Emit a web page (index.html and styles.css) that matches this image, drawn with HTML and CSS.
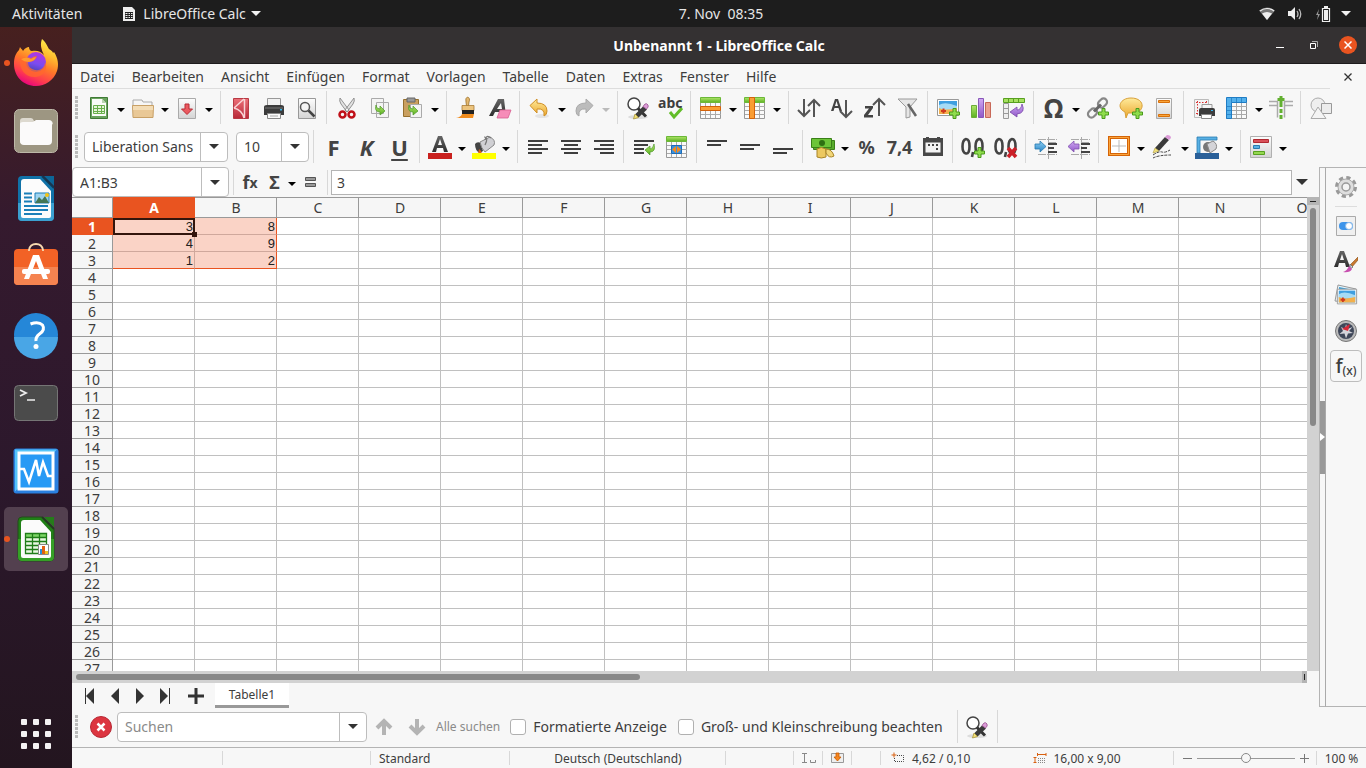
FILE: index.html
```html
<!DOCTYPE html>
<html lang="de">
<head>
  <meta charset="UTF-8" />
  <meta name="viewport" content="width=device-width, initial-scale=1.0" />
  <title>Unbenannt 1 - LibreOffice Calc</title>
  <link rel="stylesheet" href="styles.css">
</head>
<body>
  <svg class="defs" aria-hidden="true">
    <defs>
      <linearGradient id="g-dark" x1="0" y1="0" x2="0" y2="1"><stop offset="0" stop-color="#666"/><stop offset="1" stop-color="#2e2e2e"/></linearGradient>
      <linearGradient id="g-grey" x1="0" y1="0" x2="0" y2="1"><stop offset="0" stop-color="#fdfdfd"/><stop offset="1" stop-color="#d4d4d4"/></linearGradient>
      <linearGradient id="g-green" x1="0" y1="0" x2="0" y2="1"><stop offset="0" stop-color="#b0e66a"/><stop offset="1" stop-color="#5cb022"/></linearGradient>
      <linearGradient id="g-blue" x1="0" y1="0" x2="0" y2="1"><stop offset="0" stop-color="#8fd0f2"/><stop offset="1" stop-color="#2a85c8"/></linearGradient>
      <linearGradient id="g-purple" x1="0" y1="0" x2="0" y2="1"><stop offset="0" stop-color="#d0a8f4"/><stop offset="1" stop-color="#9058c8"/></linearGradient>
      <linearGradient id="g-yellow" x1="0" y1="0" x2="0" y2="1"><stop offset="0" stop-color="#ffeb9c"/><stop offset="1" stop-color="#eba62c"/></linearGradient>
      <linearGradient id="g-red" x1="0" y1="0" x2="0" y2="1"><stop offset="0" stop-color="#ec7078"/><stop offset="1" stop-color="#b82838"/></linearGradient>
      <linearGradient id="g-fox" x1=".8" y1="0" x2=".35" y2="1"><stop offset="0" stop-color="#fff44f"/><stop offset=".3" stop-color="#ffbd2f"/><stop offset=".55" stop-color="#ff7a28"/><stop offset=".8" stop-color="#ff3d4d"/><stop offset="1" stop-color="#e8057d"/></linearGradient>
      <linearGradient id="g-globe" x1=".7" y1="0" x2=".4" y2="1"><stop offset="0" stop-color="#b833e1"/><stop offset=".6" stop-color="#7a4cf0"/><stop offset="1" stop-color="#4b43b4"/></linearGradient>
    </defs>
    <symbol id="plus-badge" viewBox="0 0 11 11"><path d="M4 .5h3V4h3.500v3H7v3.500H4V7H.5V4H4z" fill="#8fdc4c" stroke="#4a9a1c"/></symbol>
    <symbol id="table-grid" viewBox="0 0 24 24">
      <path d="M1.500 6.500h20v16h-20z" fill="#fafafa" stroke="#999"/>
      <path d="M6.500 6v16M11.500 6v16M16.500 6v16M2 10.500h20M2 14.500h20M2 18.500h20" stroke="#aaa" fill="none"/>
    </symbol>
    <symbol id="find-replace" viewBox="0 0 24 24">
      <ellipse cx="12" cy="21" rx="10" ry="2" fill="#ddd"/>
      <circle cx="8" cy="8" r="6" fill="#fff" stroke="#444" stroke-width="1.500"/>
      <path d="M12 12.500l8 8" stroke="#333" stroke-width="3"/>
      <path d="M9 18.500l8.500-8.500 3.500 3.500-8.500 8z" fill="#3a3a3a"/>
      <path d="M17 10.500l2-2.500q2-1 3 1t-1.500 4z" fill="#dc9bd8" stroke="#a868a0"/>
      <path d="M9 18l-1.500 5 5-1.500z" fill="#f4e27a" stroke="#a8963a" stroke-width=".8"/>
    </symbol>
    <symbol id="picture" viewBox="0 0 24 24">
      <path d="M1.500 3.500h21v16h-21z" fill="#fff" stroke="#999"/>
      <path d="M3 5h18v13H3z" fill="#3f9fe0"/><path d="M3 9q6-4 18 1v4H3z" fill="#a6dbf5"/><path d="M3 12q6 3 18 0v6H3z" fill="#f3b04c"/>
      <path d="M5 15h5M7.500 12.500v5" stroke="#d03a1e" stroke-width="2"/>
    </symbol>
  </svg>

  <header class="topbar">
    <button class="top-item">Aktivitäten</button>
    <button class="top-item app-menu">
      <svg width="14" height="16" viewBox="0 0 14 16"><path d="M1 1h9l3 3v11H1z" fill="#eee"/><path d="M3 6h8v7H3z" fill="#222"/><path d="M3.500 7h2v1h-2zM6.500 7h1.500v1H6.500zM9 7h1.500v1H9zM3.500 9h2v1h-2zM6.500 9h1.500v1H6.500zM9 9h1.500v1H9zM3.500 11h2v1h-2zM6.500 11h1.500v1H6.500zM9 11h1.500v1H9z" fill="#eee"/></svg>
      LibreOffice Calc
      <span class="caret light"></span>
    </button>
    <button class="top-item clock">7. Nov&nbsp; 08:35</button>
    <button class="top-item system" aria-label="Systemmenü">
      <svg width="16" height="16" viewBox="0 0 16 16"><path d="M0 4.500Q8-1.500 16 4.500L8 14z" fill="#777"/><path d="M1 5q7-5 14 0" fill="none" stroke="#eee" stroke-width="1.200"/><path d="M3 7.500q5-3 10 0L8 14z" fill="#eee"/></svg>
      <svg width="16" height="16" viewBox="0 0 16 16"><path d="M1 5h3l4-4v13l-4-4H1z" fill="#eee"/><path d="M10 5q2 3 0 6M12 3q3.500 5 0 10" fill="none" stroke="#bbb" stroke-width="1.300"/></svg>
      <svg width="16" height="16" viewBox="0 0 16 16"><path d="M4 3L1 9h2l-1 5 3-6H3z" fill="#999"/><path d="M7.500 2.500h7v13h-7z" fill="none" stroke="#eee" stroke-width="1.200"/><path d="M9 4h4v10H9zM9 0h4v2H9z" fill="#eee"/></svg>
      <span class="caret light"></span>
    </button>
  </header>

  <div class="desktop">
    <nav class="dock" aria-label="Dock">
      <button class="dock-item running" aria-label="Firefox">
        <svg viewBox="0 0 48 48">
          <path d="M30 0c4 3 5 7 7 10 2 1 4 3 4 4l1-1c4 6 5 13 3 19-3 9-12 15-21 15C11 47 2 37 2 25c0-7 2-11 5-14l1-3c1 2 2 2 3 4 2-3 4-4 6-4 0 2 1 4 3 4 4-1 9 0 12 4-3-6-4-11-2-16z" fill="url(#g-fox)"/>
          <circle cx="24" cy="23" r="10" fill="url(#g-globe)"/>
          <path d="M8 20c4-2 8-2 11-1 3-2 5-2 6-2-1 5-6 6-9 6 0 5 3 7 7 8 6 1 10-3 10-8 3 6 0 14-9 15C14 39 7 31 8 20z" fill="#ff6a2c" opacity=".75"/>
          <path d="M9 20q6-3 10 0 3-2 5-2-1 4-7 5-5 0-8-3z" fill="#ff9a2e"/>
        </svg>
      </button>
      <button class="dock-item" aria-label="Dateien">
        <svg viewBox="0 0 48 48"><rect x="2.500" y="2.500" width="43" height="43" rx="5" fill="#9d9682" stroke="#bdb8a8"/><path d="M8 36V14q0-3 3-3h8q2 0 3 3h16q3 0 3 3z" fill="#ddd9cf"/><path d="M8 17q0-2 3-2h10l3-2h13q3 0 3 3v18q0 4-4 4H12q-4 0-4-4z" fill="#fbfafa"/></svg>
      </button>
      <button class="dock-item" aria-label="LibreOffice Writer">
        <svg viewBox="0 0 48 48"><path d="M10 1h20l12 12v29q0 4-4 4H10q-4 0-4-4V5q0-4 4-4z" fill="#1072a8"/><path d="M6 28h36v14q0 4-4 4H10q-4 0-4-4z" fill="#3ba0d0"/><path d="M30 1l12 12" stroke="#123a55" stroke-width="2"/><path d="M32 1h10v10z" fill="#0c6698"/><path d="M12 4h16l11 12v25q0 2-2 2H11q-2 0-2-2V7q0-3 3-3z" fill="#fcfcfc"/><path d="M12 18.500h8M12 22.500h8M12 26.500h8M12 31h24M12 35h24M12 39h18" stroke="#1b7fb8" stroke-width="2"/><path d="M23 18h14v10H23z" fill="#9fd4f0" stroke="#1b7fb8"/><path d="M23 28l4-6 3 3 3-4 4 7z" fill="#475"/><circle cx="35" cy="20" r="2" fill="#f5c211"/></svg>
      </button>
      <button class="dock-item" aria-label="Ubuntu Software">
        <svg viewBox="0 0 48 48"><path d="M6 6h36q4 0 4 4v28q0 4-4 4H6q-4 0-4-4V10q0-4 4-4z" fill="#f26226"/><path d="M2 24h44v14q0 4-4 4H6q-4 0-4-4z" fill="#f58350"/><path d="M17 8v-1q1-6 7-6t7 6v1" fill="none" stroke="#f7d9b0" stroke-width="1.800"/><path d="M21 12h6l9 24h-5l-7-18-7 18h-5z" fill="#fff"/><rect x="10" y="26" width="28" height="5" rx="2" fill="#fff"/></svg>
      </button>
      <button class="dock-item" aria-label="Hilfe">
        <svg viewBox="0 0 48 48"><circle cx="24" cy="24" r="22" fill="#2587d8"/><path d="M2 26h44a22 22 0 0 1-44 0z" fill="#49a6e6"/><path d="M18.500 13q8-3 12 1 3 5-3 9-4 3-3.500 7" fill="none" stroke="#fff" stroke-width="3"/><circle cx="24" cy="35.500" r="2.500" fill="#fff"/></svg>
      </button>
      <button class="dock-item" aria-label="Terminal">
        <svg viewBox="0 0 48 48"><rect x="2.500" y="6.500" width="43" height="35" rx="4" fill="#4b4b4b" stroke="#757575"/><path d="M8 11l6 3-6 3" fill="none" stroke="#eee" stroke-width="1.800"/><path d="M15 21h8" stroke="#eee" stroke-width="1.500"/></svg>
      </button>
      <button class="dock-item" aria-label="Systemüberwachung">
        <svg viewBox="0 0 48 48"><rect x="1.500" y="1.500" width="45" height="45" rx="3" fill="#2a80e0"/><path d="M3 2.500h42l-3 3H6v36l-3 3z" fill="#56c4f8"/><path d="M7 6h34v36H7z" fill="#279af5" stroke="#fff" stroke-width="3"/><path d="M8 22h4l5 13 7-22 3 16 4-14 5 14h5" fill="none" stroke="#fff" stroke-width="2.500"/></svg>
      </button>
      <button class="dock-item running active" aria-label="LibreOffice Calc">
        <svg viewBox="0 0 48 48"><path d="M10 2h20l12 12v28q0 4-4 4H10q-4 0-4-4V6q0-4 4-4z" fill="#208016" stroke="#244b1c"/><path d="M6 24h36v18q0 4-4 4H10q-4 0-4-4z" fill="#35a026"/><path d="M30 2l12 12" stroke="#243a20" stroke-width="2"/><path d="M32 2h10v10z" fill="#257c1a"/><path d="M12 5h16l11 12v24q0 2-2 2H11q-2 0-2-2V8q0-3 3-3z" fill="#fbfbfb"/><path d="M13 18h22v20H13z" fill="#e8f8e0"/><path d="M13 18h22v4H13z" fill="#7cd665"/><path d="M13.500 18.500h21v20h-21zM20.500 18v20M27.500 18v20M13 22.500h22M13 26.500h22M13 30.500h22M13 34.500h22" fill="none" stroke="#1f7d18" stroke-width="1.300"/><path d="M26.500 29.500h10v10h-10z" fill="#fff" stroke="#888"/><path d="M28 34h2v5h-2z" fill="#2a90d8"/><path d="M30 31h3v8h-3z" fill="#e06010"/><path d="M33 36h3v3h-3z" fill="#f0c020"/></svg>
      </button>
      <button class="dock-item apps" aria-label="Anwendungen anzeigen">
        <svg viewBox="0 0 48 48"><g fill="#f4f2f3"><rect x="9" y="9" width="6" height="6" rx="1"/><rect x="21" y="9" width="6" height="6" rx="1"/><rect x="33" y="9" width="6" height="6" rx="1"/><rect x="9" y="21" width="6" height="6" rx="1"/><rect x="21" y="21" width="6" height="6" rx="1"/><rect x="33" y="21" width="6" height="6" rx="1"/><rect x="9" y="33" width="6" height="6" rx="1"/><rect x="21" y="33" width="6" height="6" rx="1"/><rect x="33" y="33" width="6" height="6" rx="1"/></g></svg>
      </button>
    </nav>

    <main class="window">
      <div class="titlebar">
        <h1>Unbenannt 1 - LibreOffice Calc</h1>
        <div class="window-controls">
          <button aria-label="Minimieren"><svg width="10" height="12" viewBox="0 0 10 12"><path d="M1 8.500h8" stroke="#fff"/></svg></button>
          <button aria-label="Wiederherstellen"><svg width="10" height="10" viewBox="0 0 10 10"><path d="M3 1.500h5.500V7" fill="none" stroke="#aaa"/><path d="M1.500 3.500h5v5h-5z" fill="none" stroke="#fff"/></svg></button>
          <button class="close" aria-label="Schließen"><svg width="8" height="8" viewBox="0 0 8 8"><path d="M.5.5l7 7M7.500.5l-7 7" stroke="#fff" stroke-width="1.500"/></svg></button>
        </div>
      </div>

      <div class="menubar">
        <nav class="menus" aria-label="Menü">
          <button>Datei</button><button>Bearbeiten</button><button>Ansicht</button><button>Einfügen</button><button>Format</button><button>Vorlagen</button><button>Tabelle</button><button>Daten</button><button>Extras</button><button>Fenster</button><button>Hilfe</button>
        </nav>
        <button class="close-doc" aria-label="Dokument schließen"><svg width="8" height="8" viewBox="0 0 8 8"><path d="M.5.5l7 7M7.500.5l-7 7" stroke="#333" stroke-width="1.300"/></svg></button>
      </div>

      <!-- Standard -->
      <div class="toolbar" role="toolbar" aria-label="Standard">
        <span class="grip"></span>
        <button class="tool dd" aria-label="Neu"><svg viewBox="0 0 24 24"><path d="M3.500 1.500h17v21h-17z" fill="#6aa35e" stroke="#3f7a35"/><path d="M5 3h10l4 4v13H5z" fill="#fafcf8"/><path d="M15 3v4h4z" fill="#b8d4b0"/><path d="M6.500 9.500h11v8h-11zM10.500 9v9M14.500 9v9M6 12.500h12M6 15.500h12" fill="#e4f5d8" stroke="#6ab04c"/></svg></button>
        <button class="tool dd" aria-label="Öffnen"><svg viewBox="0 0 24 24"><path d="M2 4h9l1 2h9v8H2z" fill="#f6f6f6" stroke="#aaa"/><path d="M1.500 9.500h21l-.5 12H2z" fill="#e9c896" stroke="#c8a066"/><path d="M2 10h20v4H2z" fill="#f3dcb5"/></svg></button>
        <button class="tool dd" aria-label="Speichern"><svg viewBox="0 0 24 24"><path d="M3.500 2.500h17v20h-17z" fill="url(#g-grey)" stroke="#aaa"/><path d="M10 8h4v5h3.500L12 18.500 6.500 13H10z" fill="#ea5a60" stroke="#b92a35"/></svg></button>
        <span class="sep"></span>
        <button class="tool" aria-label="Als PDF exportieren"><svg viewBox="0 0 24 24"><path d="M4.500 2.500h15v20h-15z" fill="url(#g-red)" stroke="#b83a44"/><path d="M15.500 3v19M5 12l10-9M5 12q8 2 10 10" fill="none" stroke="#f8d4d6" stroke-width="1.500"/></svg></button>
        <button class="tool" aria-label="Drucken"><svg viewBox="0 0 24 24"><path d="M5.500 2.500h13v9h-13z" fill="#f2f2f2" stroke="#999"/><path d="M2 11q0-2 3-2h14q3 0 3 2v8H2z" fill="#3c3c3c"/><path d="M3 12h18" stroke="#777"/><path d="M5.500 17.500h13v5h-13z" fill="#fafafa" stroke="#888"/><path d="M8 20h8" stroke="#aaa"/><path d="M18 13h2v1.500h-2z" fill="#35b8f0"/></svg></button>
        <button class="tool" aria-label="Druckvorschau"><svg viewBox="0 0 24 24"><path d="M3.500 2.500h17v20h-17z" fill="url(#g-grey)" stroke="#999"/><circle cx="10" cy="11" r="4.500" fill="#f4f4f4" stroke="#555" stroke-width="1.500"/><path d="M13.500 14.500l6 6" stroke="#444" stroke-width="2.500"/></svg></button>
        <span class="sep"></span>
        <button class="tool" aria-label="Ausschneiden"><svg viewBox="0 0 24 24"><path d="M5 2q-1 3 1 6l6 8 2-2zM19 2q1 3-1 6l-6 8-2-2z" fill="#e2e2e2" stroke="#888" stroke-width=".9"/><circle cx="7.500" cy="18.500" r="3" fill="none" stroke="#c01018" stroke-width="2.500"/><circle cx="16.500" cy="18.500" r="3" fill="none" stroke="#c01018" stroke-width="2.500"/></svg></button>
        <button class="tool" aria-label="Kopieren"><svg viewBox="0 0 24 24"><path d="M3.500 2.500h12v15h-12zM8.500 6.500h12v15h-12z" fill="#f4f4f4" stroke="#aaa"/><path d="M8 9q0 4 4 4v-3l5 5-5 4v-3q-6 0-4-7z" fill="url(#g-green)" stroke="#4e9a28" stroke-width=".7"/></svg></button>
        <button class="tool dd" aria-label="Einfügen"><svg viewBox="0 0 24 24"><path d="M2.500 3.500h15v17h-15z" fill="#caa060" stroke="#96702e"/><path d="M6 2h8v4H6z" fill="#999" stroke="#666"/><path d="M9.500 8.500h11v13h-11z" fill="#f4f4f4" stroke="#aaa"/><path d="M8 9q0 4 4 4v-3l5 5-5 4v-3q-6 0-4-7z" fill="url(#g-green)" stroke="#4e9a28" stroke-width=".7"/></svg></button>
        <span class="sep"></span>
        <button class="tool" aria-label="Format übertragen"><svg viewBox="0 0 24 24"><path d="M12.500 1q3 1 1.500 5l-.5 4h-2L11 6q-1-4 1.500-5z" fill="#e4b870" stroke="#9a7028" stroke-width=".8"/><path d="M7 9.500h12v5H7z" fill="#ecc47e" stroke="#a87c38" stroke-width=".8"/><path d="M7 14h12v4H7z" fill="#222"/><path d="M7 18h12l-1 4H1q5-1 6-4z" fill="#f08c1e"/></svg></button>
        <button class="tool" aria-label="Formatierung löschen"><svg viewBox="0 0 24 24"><path d="M1 20L10 3h6l2 17h-4v-4H7l-2 4zM9 13h5l-1-6z" fill="url(#g-dark)"/><path d="M12 14h11l-3 8H9z" fill="#f68cb8" stroke="#d86090" stroke-width=".8"/></svg></button>
        <span class="sep"></span>
        <button class="tool dd" aria-label="Rückgängig"><svg viewBox="0 0 24 24"><ellipse cx="14" cy="20" rx="7" ry="2" fill="#e4e4e4"/><path d="M2 9.500L9 3v4q10 0 10 8 0 4-3 5 1-8-7-7v4z" fill="url(#g-yellow)" stroke="#d09028"/></svg></button>
        <button class="tool dd disabled" aria-label="Wiederherstellen"><svg viewBox="0 0 24 24"><path d="M21 9.500L14 3v4Q4 7 4 15q0 4 3 5-1-8 7-7v4z" fill="#bcbcbc" stroke="#aaa"/></svg></button>
        <span class="sep"></span>
        <button class="tool" aria-label="Suchen und Ersetzen"><svg><use href="#find-replace"/></svg></button>
        <button class="tool abc" aria-label="Rechtschreibung"><b>abc</b><svg viewBox="0 0 24 24"><path d="M11 16l4 5 8-9" fill="none" stroke="#62bd28" stroke-width="3"/></svg></button>
        <span class="sep"></span>
        <button class="tool dd" aria-label="Zeile"><svg viewBox="0 0 24 24"><use href="#table-grid" width="24" height="24"/><path d="M1.500 1.500h20v5h-20z" fill="url(#g-green)" stroke="#6cb838"/><path d="M1.500 10.500h20v4h-20z" fill="#f99d34" stroke="#d3620a"/></svg></button>
        <button class="tool dd" aria-label="Spalte"><svg viewBox="0 0 24 24"><use href="#table-grid" width="24" height="24"/><path d="M1.500 1.500h20v5h-20z" fill="url(#g-green)" stroke="#6cb838"/><path d="M6.500 1.500h5v21h-5z" fill="#f99d34" stroke="#d3620a"/></svg></button>
        <span class="sep"></span>
        <button class="tool" aria-label="Sortieren"><svg viewBox="0 0 24 24"><path d="M7 3v17M1 14l6 6 6-6M17 21V4M11 10l6-6 6 6" fill="none" stroke="#555" stroke-width="2"/></svg></button>
        <button class="tool" aria-label="Aufsteigend sortieren"><svg viewBox="0 0 24 24"><path d="M1 15L5 3h3l4 12H9.500l-1-3h-4l-1 3zM5 10h3L6.500 5z" fill="#444"/><path d="M16 4v17M10 15l6 6 6-6" fill="none" stroke="#555" stroke-width="2"/></svg></button>
        <button class="tool" aria-label="Absteigend sortieren"><svg viewBox="0 0 24 24"><path d="M2 10h8v2l-5 7h5v2.500H1V19l5-6.500H2z" fill="#444"/><path d="M16 20V3M10 9l6-6 6 6" fill="none" stroke="#555" stroke-width="2"/></svg></button>
        <button class="tool" aria-label="AutoFilter"><svg viewBox="0 0 24 24"><path d="M2 3h19l-7 8v10l-4 1V11z" fill="#e6e6e6" stroke="#999"/><path d="M12 8l8 12" stroke="#666" stroke-width="2.500"/></svg></button>
        <span class="sep"></span>
        <button class="tool" aria-label="Bild einfügen"><svg viewBox="0 0 24 24"><use href="#picture" width="24" height="24"/><use href="#plus-badge" x="13" y="12" width="11" height="11"/></svg></button>
        <button class="tool" aria-label="Diagramm einfügen"><svg viewBox="0 0 24 24"><path d="M2.500 9.500h5v12h-5z" fill="url(#g-green)" stroke="#6cac38"/><path d="M9.500 2.500h5v19h-5z" fill="url(#g-purple)" stroke="#8858b8"/><path d="M16.500 6.500h5v15h-5z" fill="#eba090" stroke="#c86858"/></svg></button>
        <button class="tool" aria-label="Pivot-Tabelle einfügen"><svg viewBox="0 0 24 24"><path d="M1.500 2.500h21v4h-21zM6.500 2v5M11.500 2v5M16.500 2v5" fill="#a6e060" stroke="#58a020"/><path d="M1.500 7.500h5v15h-5zM1 12.500h6M1 17.500h6" fill="#eee" stroke="#999"/><path d="M20 8q4 9-5 10v3l-7-5 7-5v3q4 0 5-6z" fill="url(#g-purple)" stroke="#7848a8" stroke-width=".8"/></svg></button>
        <span class="sep"></span>
        <button class="tool dd glyph omega" aria-label="Sonderzeichen">Ω</button>
        <button class="tool" aria-label="Hyperlink einfügen"><svg viewBox="0 0 24 24"><g fill="none" stroke="#888" stroke-width="2.200"><rect x="13" y="2" width="7" height="10" rx="3.500" transform="rotate(45 16.500 7)"/><rect x="3" y="12" width="7" height="10" rx="3.500" transform="rotate(45 6.500 17)"/></g><path d="M8 15.500l7-7" stroke="#666" stroke-width="3"/><use href="#plus-badge" x="12" y="12" width="11" height="11"/></svg></button>
        <button class="tool" aria-label="Kommentar einfügen"><svg viewBox="0 0 24 24"><path d="M12 2c15 0 14 15 2 15l-5 0-2 5-1-6C-3 12 1 2 12 2z" fill="url(#g-yellow)" stroke="#d8a038"/><use href="#plus-badge" x="13" y="12" width="11" height="11"/></svg></button>
        <button class="tool" aria-label="Kopf- und Fußzeilen"><svg viewBox="0 0 24 24"><path d="M4.500 2.500h15v20h-15z" fill="url(#g-grey)" stroke="#aaa"/><path d="M6.500 4.500h11v2h-11zM6.500 18.500h11v2h-11z" fill="#f9a53a" stroke="#d8700a"/></svg></button>
        <span class="sep"></span>
        <button class="tool" aria-label="Druckbereich"><svg viewBox="0 0 24 24"><path d="M2.500 3.500h14v18h-14z" fill="#f4f4f4" stroke="#bbb"/><path d="M4 6.500h12M5.500 5v14M14.500 5v8M4 17.500h5" stroke="#d83030" stroke-dasharray="1.500 1.500"/><path d="M10 8.500h10v5H10z" fill="#f4f4f4" stroke="#999"/><path d="M7 14q0-2 2-2h12q2 0 2 2v6H7z" fill="#3c3c3c"/><path d="M9.500 18.500h10v4h-10z" fill="#fff" stroke="#888"/><path d="M19 14h2v1h-2z" fill="#35b8f0"/></svg></button>
        <button class="tool dd" aria-label="Zeilen und Spalten fixieren"><svg viewBox="0 0 24 24"><use href="#table-grid" width="24" height="24"/><path d="M1.500 1.500h20v5h-15v16h-5z" fill="#52b0ec" stroke="#1f7cc4"/><path d="M6.500 2v4M11.500 2v4M16.500 2v4M2 10.500h4M2 14.500h4M2 18.500h4" stroke="#2c88cc"/></svg></button>
        <button class="tool" aria-label="Fenster teilen"><svg viewBox="0 0 24 24"><path d="M0 5.500h8.500v16M0 9.500h8M24 5.500h-8.500v16M24 9.500h-8" fill="none" stroke="#aaa" stroke-width="1.500"/><path d="M12 7v16" stroke="#62b030" stroke-width="3" stroke-dasharray="4 2"/><path d="M12 0v7M8.500 3.500h7" stroke="#62b030" stroke-width="3"/></svg></button>
        <span class="sep"></span>
        <button class="tool" aria-label="Zeichenfunktionen"><svg viewBox="0 0 24 24"><circle cx="9" cy="9" r="7" fill="#eee" stroke="#aaa"/><path d="M12.500 7.500h10v10h-10z" fill="#ececec" stroke="#999"/><path d="M9 11l8 11.500H2z" fill="#f4f4f4" stroke="#aaa"/></svg></button>
      </div>

      <!-- Format -->
      <div class="toolbar format-bar" role="toolbar" aria-label="Format">
        <span class="grip"></span>
        <div class="combo font-name">
          <input type="text" aria-label="Schriftname" value="Liberation Sans"><button aria-label="Schriftname wählen"><span class="caret"></span></button>
        </div>
        <div class="combo font-size">
          <input type="text" aria-label="Schriftgröße" value="10"><button aria-label="Schriftgröße wählen"><span class="caret"></span></button>
        </div>
        <span class="sep"></span>
        <button class="tool glyph" aria-label="Fett">F</button>
        <button class="tool glyph italic" aria-label="Kursiv">K</button>
        <button class="tool glyph underline" aria-label="Unterstrichen">U</button>
        <span class="sep"></span>
        <button class="tool dd" aria-label="Schriftfarbe"><svg viewBox="0 0 24 24"><path d="M4 17L10 1h4l6 16h-4l-1-4H9l-1 4zM10 10h4l-2-6z" fill="url(#g-dark)"/><path d="M0 18h24v6H0z" fill="#c9211e"/></svg></button>
        <button class="tool dd" aria-label="Hintergrundfarbe"><svg viewBox="0 0 24 24"><path d="M3 9q2-3 6-1l2 8-3 2q-5-2-5-9z" fill="#444"/><path d="M8 7l10-5q6 3 4 8L13 17q-4-4-5-10z" fill="#d0d0d4" stroke="#888"/><path d="M12 2q5 0 1 8M19 3q-5-4-6 2" fill="none" stroke="#777" stroke-width="1.200"/><path d="M7 14q3 2 3 5H6z" fill="#e06018"/><path d="M0 18h24v6H0z" fill="#ff0"/></svg></button>
        <span class="sep"></span>
        <button class="tool" aria-label="Linksbündig"><svg viewBox="0 0 24 24"><path d="M2 6h20M2 10h14M2 14h20M2 18h14" stroke="#3e3e3e" stroke-width="2"/></svg></button>
        <button class="tool" aria-label="Zentriert"><svg viewBox="0 0 24 24"><path d="M2 6h20M5 10h14M2 14h20M5 18h14" stroke="#3e3e3e" stroke-width="2"/></svg></button>
        <button class="tool" aria-label="Rechtsbündig"><svg viewBox="0 0 24 24"><path d="M2 6h20M8 10h14M2 14h20M8 18h14" stroke="#3e3e3e" stroke-width="2"/></svg></button>
        <span class="sep"></span>
        <button class="tool" aria-label="Zeilenumbruch"><svg viewBox="0 0 24 24"><path d="M2 6h20M2 10h14M2 14h10M2 18h10" stroke="#3e3e3e" stroke-width="2"/><path d="M22 9q2 8-4 8v3l-5-5 5-4v3q3 0 4-5z" fill="url(#g-green)" stroke="#4e9a28" stroke-width=".7"/></svg></button>
        <button class="tool" aria-label="Zellen verbinden"><svg viewBox="0 0 24 24"><use href="#table-grid" width="24" height="24"/><path d="M1.500 1.500h20v5h-20z" fill="url(#g-green)" stroke="#6cb838"/><path d="M6.500 10.500h10v8h-10z" fill="#3a92e0" stroke="#1c6cb8"/><path d="M11 11v7l-4-3.500zM12 11v7l4-3.500z" fill="#f58a1e"/></svg></button>
        <span class="sep"></span>
        <button class="tool" aria-label="Oben ausrichten"><svg viewBox="0 0 24 24"><path d="M2 6h20M2 10h14" stroke="#3e3e3e" stroke-width="2"/></svg></button>
        <button class="tool" aria-label="Vertikal zentrieren"><svg viewBox="0 0 24 24"><path d="M2 10h20M2 14h14" stroke="#3e3e3e" stroke-width="2"/></svg></button>
        <button class="tool" aria-label="Unten ausrichten"><svg viewBox="0 0 24 24"><path d="M2 14h20M2 18h14" stroke="#3e3e3e" stroke-width="2"/></svg></button>
        <span class="sep"></span>
        <button class="tool dd" aria-label="Währung"><svg viewBox="0 0 24 24"><path d="M2.500 5.500h21v9h-21z" fill="#58ac2c" stroke="#3a8018"/><path d="M.5 3.500h20v9h-20z" fill="#6cc438" stroke="#3a8018"/><circle cx="11" cy="8" r="3" fill="#2e7012"/><path d="M6 14q4-3 9 0v8q-5 2-9 0z" fill="#ecc860" stroke="#a88428"/><path d="M15 14q6 0 8 7-5 3-8-3z" fill="#f2d678" stroke="#a88428"/></svg></button>
        <button class="tool glyph number" aria-label="Prozent">%</button>
        <button class="tool glyph number" aria-label="Zahl">7,4</button>
        <button class="tool" aria-label="Datum"><svg viewBox="0 0 24 24"><path d="M2 3h3V2h3v1h8V2h3v1h3v18H2z" fill="#484848"/><path d="M4.500 7.500h15v10h-15z" fill="#f4f4f4"/><path d="M7 9h2v2H7zM11 9h2v2h-2zM15 9h2v2h-2zM15 13h2v2h-2z" fill="#444"/></svg></button>
        <span class="sep"></span>
        <button class="tool" aria-label="Dezimalstelle hinzufügen"><svg viewBox="0 0 24 24"><path d="M5 4q3.500 0 3.500 7.500T5 18.500 1.500 11.500 5 4zM18 4q3.500 0 3.500 7.500T18 18.500t-3.500-7T18 4zM12 17l-1 5" fill="none" stroke="#444" stroke-width="2.600"/><use href="#plus-badge" x="13" y="12" width="11" height="11"/></svg></button>
        <button class="tool" aria-label="Dezimalstelle löschen"><svg viewBox="0 0 24 24"><path d="M5 4q3.500 0 3.500 7.500T5 18.500 1.500 11.500 5 4zM18 4q3.500 0 3.500 7.500T18 18.500t-3.500-7T18 4zM12 17l-1 5" fill="none" stroke="#444" stroke-width="2.600"/><path d="M14 13l8 9M22 13l-8 9" stroke="#cc2028" stroke-width="3.500"/></svg></button>
        <span class="sep"></span>
        <button class="tool" aria-label="Einzug erhöhen"><svg viewBox="0 0 24 24"><path d="M4 4.500h19M4 19.500h19M14 7.500h9M14.500 2v22" stroke="#aaa" stroke-dasharray="8 1"/><path d="M14 9h9M14 13h6M14 17h9" stroke="#444" stroke-width="2"/><path d="M1 9h5V6l6 5.500-6 5.500v-3H1z" fill="url(#g-blue)" stroke="#2478b0" stroke-width=".8"/></svg></button>
        <button class="tool" aria-label="Einzug verringern"><svg viewBox="0 0 24 24"><path d="M4 4.500h19M4 19.500h19M14 7.500h9M14.500 2v22" stroke="#aaa" stroke-dasharray="8 1"/><path d="M14 9h9M14 13h6M14 17h9" stroke="#444" stroke-width="2"/><path d="M12 9H7V6l-6 5.500L7 17v-3h5z" fill="url(#g-purple)" stroke="#8050b0" stroke-width=".8"/></svg></button>
        <span class="sep"></span>
        <button class="tool dd" aria-label="Umrandung"><svg viewBox="0 0 24 24"><path d="M2.500 2.500h19v17h-19z" fill="#fff" stroke="#d46408" stroke-width="3"/><path d="M2.500 2.500h19v17h-19z" fill="none" stroke="#fba53c"/><path d="M12 5v12M5 11h14" stroke="#bbb"/></svg></button>
        <button class="tool dd" aria-label="Umrandungsstil"><svg viewBox="0 0 24 24"><path d="M4 13L14 2l4 3L8 16z" fill="#3a3a3a"/><path d="M14 2l2-2q4 0 4 3l-2 2z" fill="#dc9bd8"/><path d="M4 13l-2 5 6-2z" fill="#f4e27a" stroke="#a8963a" stroke-width=".6"/><path d="M2 20q6-4 9-3t8-2M2 23q6-3 18-3" fill="none" stroke="#444" stroke-dasharray="3 1"/></svg></button>
        <button class="tool dd" aria-label="Umrandungsfarbe"><svg viewBox="0 0 24 24"><path d="M2 18V2h20v3H5v13z" fill="#58b0e4" stroke="#287cb0" stroke-width=".8"/><circle cx="13" cy="12" r="5" fill="#777"/><path d="M12 9l6-3q5 3 3 8l-6 4z" fill="#d4d4d8" stroke="#888"/><path d="M0 18h24v6H0z" fill="#2a6099"/></svg></button>
        <span class="sep"></span>
        <button class="tool dd" aria-label="Bedingte Formatierung"><svg viewBox="0 0 24 24"><path d="M1.500 1.500h21v21h-21z" fill="url(#g-grey)" stroke="#b0b0b0"/><path d="M4.500 4.500h15v3h-15z" fill="#d85058" stroke="#b02830"/><path d="M4.500 10.500h6v3h-6z" fill="#58b0e4" stroke="#287cb0"/><path d="M4.500 16.500h11v3h-11z" fill="#94d850" stroke="#58a020"/></svg></button>
      </div>

      <div class="workspace">
        <div class="editor">
          <div class="formula-bar">
            <div class="combo name-box">
              <input type="text" aria-label="Namenfeld" value="A1:B3"><button aria-label="Bereich wählen"><span class="caret"></span></button>
            </div>
            <span class="sep"></span>
            <button class="tool small glyph fx" aria-label="Funktionsassistent">f<sub>x</sub></button>
            <button class="tool small dd glyph sigma" aria-label="Summe">Σ</button>
            <button class="tool small" aria-label="Formel"><svg width="12" height="10" viewBox="0 0 12 10"><path d="M1.500.5h10v3h-10zM1.500 6.500h10v3h-10z" fill="#999" stroke="#555"/></svg></button>
            <span class="sep"></span>
            <input class="formula-input" type="text" aria-label="Eingabezeile" value="3">
            <button class="expand" aria-label="Eingabezeile erweitern"><span class="caret big"></span></button>
          </div>

          <div class="sheet-area">
            <div class="sheet-view"><table class="sheet" id="sheet"></table></div>
            <div class="scroll-v"><span class="split"></span><span class="thumb"></span></div>
          </div>
          <div class="scroll-h"><span class="track"><span class="thumb"></span></span><span class="split"></span></div>

          <div class="tabs">
            <button aria-label="Erste Tabelle"><svg width="12" height="16" viewBox="0 0 12 16"><path d="M1.500 0v16" stroke="#333"/><path d="M10 0v16L2 8z" fill="#333"/></svg></button>
            <button aria-label="Vorherige Tabelle"><svg width="12" height="16" viewBox="0 0 12 16"><path d="M10 0v16L2 8z" fill="#333"/></svg></button>
            <button aria-label="Nächste Tabelle"><svg width="12" height="16" viewBox="0 0 12 16"><path d="M2 0v16l8-8z" fill="#333"/></svg></button>
            <button aria-label="Letzte Tabelle"><svg width="12" height="16" viewBox="0 0 12 16"><path d="M10.500 0v16" stroke="#333"/><path d="M1 0v16l8-8z" fill="#333"/></svg></button>
            <button class="add" aria-label="Tabelle hinzufügen"><svg width="18" height="18" viewBox="0 0 18 18"><path d="M9 1v16M1 9h16" stroke="#333" stroke-width="3"/></svg></button>
            <button class="tab">Tabelle1</button>
          </div>
        </div>

        <div class="splitter"><button aria-label="Seitenleiste ausblenden"></button></div>
        <aside class="sidebar" aria-label="Seitenleiste">
          <button aria-label="Einstellungen"><svg viewBox="0 0 24 24"><circle cx="12" cy="12" r="9" fill="none" stroke="#999" stroke-width="4" stroke-dasharray="4 3.070"/><circle cx="12" cy="12" r="8" fill="#dedede" stroke="#aaa"/><circle cx="12" cy="12" r="4" fill="#f4f4f4" stroke="#999" stroke-width="1.500"/></svg></button>
          <hr>
          <button aria-label="Eigenschaften"><svg viewBox="0 0 24 24"><path d="M2.500 2.500h19v19h-19z" fill="#f0f0f0" stroke="#aaa"/><rect x="5" y="8" width="14" height="8" rx="4" fill="#3d94ea"/><circle cx="15" cy="12" r="3.500" fill="#fff" stroke="#88b8e8"/></svg></button>
          <button aria-label="Formatvorlagen"><svg viewBox="0 0 24 24"><path d="M0 18L6 2h4l6 16h-4l-1-4H5l-1 4zM6 11h4L8 5z" fill="url(#g-dark)"/><path d="M24 8l-8 8 2 2 6-7z" fill="#c87830" stroke="#8a5018" stroke-width=".6"/><path d="M16 15l3 3-3 2z" fill="#ddd" stroke="#777"/><path d="M15 17l3 3q-2 4-9 3 4-1 6-6z" fill="#c850b0"/></svg></button>
          <button aria-label="Galerie"><svg viewBox="0 0 24 24"><path d="M4 1l18 4v14L1 17z" fill="#eaf4f8" stroke="#999"/><path d="M5 3l15 3H5z" fill="#3fa0d8"/><use href="#picture" x="2" y="2" width="22" height="22"/></svg></button>
          <button aria-label="Navigator"><svg viewBox="0 0 24 24"><circle cx="12" cy="12" r="10.500" fill="#bbb" stroke="#777"/><circle cx="12" cy="12" r="8" fill="#3e4658"/><path d="M12 5l1.500 5 5-2-3.500 4 4 2-5 .5-2 5-1.500-5-5 .5L9 12 7 8l4 2z" fill="#d4d4da"/><path d="M16 5l-2 7-6-2z" fill="#d82838"/></svg></button>
          <button class="active func" aria-label="Funktionen">f<sub>(x)</sub></button>
        </aside>
      </div>

      <div class="findbar">
        <span class="grip"></span>
        <button class="find-close" aria-label="Suchleiste schließen"><svg width="22" height="22" viewBox="0 0 22 22"><circle cx="11" cy="11" r="10.500" fill="#dc3540" stroke="#b82834"/><path d="M7.500 7.500l7 7M14.500 7.500l-7 7" stroke="#fff" stroke-width="2.500"/></svg></button>
        <div class="combo find-text">
          <input type="text" aria-label="Suchen" placeholder="Suchen"><button aria-label="Suchverlauf"><span class="caret"></span></button>
        </div>
        <button class="find-step" aria-label="Rückwärts suchen"><svg width="18" height="18" viewBox="0 0 18 18"><path d="M9 17V5M2 10l7-7 7 7" fill="none" stroke="#b4b4b4" stroke-width="4"/></svg></button>
        <button class="find-step" aria-label="Vorwärts suchen"><svg width="18" height="18" viewBox="0 0 18 18"><path d="M9 1v12M2 8l7 7 7-7" fill="none" stroke="#b4b4b4" stroke-width="4"/></svg></button>
        <button class="find-all">Alle suchen</button>
        <label><input type="checkbox">Formatierte Anzeige</label>
        <label><input type="checkbox">Groß- und Kleinschreibung beachten</label>
        <span class="sep"></span>
        <button class="tool" aria-label="Suchen und Ersetzen"><svg><use href="#find-replace"/></svg></button>
        <span class="sep"></span>
      </div>

      <footer class="statusbar">
        <div class="cell grow"></div>
        <div class="cell count"></div>
        <div class="cell style">Standard</div>
        <div class="cell language">Deutsch (Deutschland)</div>
        <div class="cell mode"></div>
        <div class="cell icon"><svg width="16" height="12" viewBox="0 0 16 12"><path d="M1 1.500h5M3.500 2v9M1 10.500h5M9.500 8v2.500h5V8" fill="none" stroke="#888"/></svg></div>
        <div class="cell icon"><svg width="13" height="12" viewBox="0 0 13 12"><path d="M.5 1.500h12v9H.5z" fill="#eee" stroke="#999"/><path d="M5 1h3v4h2L6.500 9 3 5h2z" fill="#f5861e" stroke="#c85a00" stroke-width=".8"/></svg></div>
        <div class="cell icon"></div>
        <div class="cell position">
          <span><svg width="14" height="12" viewBox="0 0 14 12"><path d="M3 .5v5M.5 3h5" stroke="#d86010"/><path d="M3.500 6v3.500h9v-6H6" fill="none" stroke="#444" stroke-dasharray="1 1"/></svg>4,62 / 0,10</span>
          <span><svg width="14" height="12" viewBox="0 0 14 12"><path d="M4 2.500h9M4.500 1v3M13 1v3M2 5v6M.5 5.500h3M.5 10.500h3" stroke="#d86010"/><path d="M5 6.500h8M5 8.500h8M5 10.500h8" stroke="#888" stroke-dasharray="1 1"/></svg>16,00 x 9,00</span>
        </div>
        <div class="cell zoom">
          <button aria-label="Verkleinern"><svg width="9" height="9" viewBox="0 0 9 9"><path d="M0 4.500h9" stroke="#777"/></svg></button>
          <input type="range" min="0" max="100" value="50" aria-label="Maßstab">
          <button aria-label="Vergrößern"><svg width="9" height="9" viewBox="0 0 9 9"><path d="M0 4.500h9M4.500 0v9" stroke="#777"/></svg></button>
        </div>
        <div class="cell percent">100 %</div>
      </footer>
    </main>
  </div>
  <script src="sheet.js"></script>
</body>
</html>
```

FILE: styles.css
```css
* {
  box-sizing: border-box;
}
body {
  margin: 0;
  height: 100vh;
  display: flex;
  flex-direction: column;
  overflow: hidden;
  font-family: "Noto Sans", "Open Sans", sans-serif;
  font-size: 14px;
  color: #3d3d3d;
  background: #f7f7f7;
}
button,
input {
  font: inherit;
  color: inherit;
}
button {
  border: 0;
  padding: 0;
  background: none;
}
svg {
  display: block;
  flex: none;
}
.defs {
  position: absolute;
  width: 0;
  height: 0;
}

/* small triangle used by every drop-down */
.caret {
  width: 0;
  height: 0;
  border: 5px solid transparent;
  border-top-color: #333;
  border-bottom: 0;
}
.caret.light {
  border-top-color: #f2f2f2;
}
.caret.big {
  border-width: 6px 6px 0;
}

/* top panel */
.topbar {
  flex: none;
  height: 27px;
  display: flex;
  align-items: center;
  position: relative;
  padding: 0 15px 0 12px;
  background: #1d1d1d;
  color: #e6e6e6;
}
.top-item {
  display: flex;
  align-items: center;
  gap: 7px;
  white-space: nowrap;
}
.app-menu {
  margin-left: 40px;
}
.top-item .caret {
  margin-left: -2px;
}
.clock {
  position: absolute;
  left: 50%;
  top: 4px;
  transform: translateX(38px) translateX(-50%);
}
.system {
  margin-left: auto;
  gap: 12px;
}

.desktop {
  flex: 1;
  display: flex;
  min-height: 0;
}

/* dock */
.dock {
  width: 72px;
  flex: none;
  display: flex;
  flex-direction: column;
  align-items: center;
  gap: 4px;
  padding: 4px 0 2px;
  background: linear-gradient(#47201f, #351a2e 25%, #2c182c 60%, #23151f);
}
.dock-item {
  width: 64px;
  height: 64px;
  flex: none;
  position: relative;
  display: grid;
  place-items: center;
  border-radius: 5px;
}
.dock-item svg {
  width: 48px;
  height: 48px;
}
.dock-item.active {
  background: #53404f;
}
.dock-item.running::before {
  content: "";
  position: absolute;
  left: 0;
  top: 29px;
  width: 6px;
  height: 6px;
  border-radius: 50%;
  background: #e95420;
}
.dock-item.apps {
  margin-top: auto;
}

/* window */
.window {
  flex: 1;
  min-width: 0;
  display: flex;
  flex-direction: column;
}
.titlebar {
  flex: none;
  height: 37px;
  position: relative;
  display: flex;
  align-items: center;
  justify-content: center;
  background: #343132;
  border-bottom: 1px solid #1e1c1d;
  color: #fff;
}
.titlebar h1 {
  margin: 0;
  font-size: 14px;
  font-weight: 700;
}
.window-controls {
  position: absolute;
  right: 9px;
  top: 9px;
  display: flex;
  align-items: center;
  gap: 24px;
}
.window-controls .close {
  width: 18px;
  height: 18px;
  margin-left: -4px;
  display: grid;
  place-items: center;
  border-radius: 50%;
  background: #e95420;
}
.menubar {
  flex: none;
  height: 25px;
  display: flex;
}
.menus {
  flex: 1;
  display: flex;
  gap: 1px;
  border-bottom: 1px solid #ddd;
}
.menus button {
  padding: 0 8px;
}
.close-doc {
  width: 36px;
  display: grid;
  place-items: center;
}

/* toolbars */
.toolbar {
  flex: none;
  height: 39px;
  padding-bottom: 2px;
  display: flex;
  align-items: center;
}
.grip {
  width: 3px;
  height: 24px;
  margin: 0 4px 0 3px;
  background: repeating-linear-gradient(#bbb 0 3px, transparent 3px 4px);
}
.sep {
  flex: none;
  width: 7px;
  height: 33px;
  background: linear-gradient(#d8d8d8, #d8d8d8) center / 1px 100% no-repeat;
}
.dd + .sep {
  margin-left: 3px;
}
.tool {
  flex: none;
  position: relative;
  width: 33px;
  height: 33px;
  display: flex;
  align-items: center;
  justify-content: center;
}
.tool > svg {
  width: 24px;
  height: 24px;
}
.tool.dd {
  width: 44px;
  padding-right: 11px;
}
.tool.dd::after {
  content: "";
  position: absolute;
  right: 1px;
  top: 17px;
  border: 4px solid transparent;
  border-top-color: #000;
  border-bottom: 0;
}
.tool.disabled::after {
  border-top-color: #bbb;
}
.abc b {
  position: absolute;
  top: 3px;
  left: 4px;
  font-size: 14px;
  line-height: 18px;
}
.glyph {
  font-size: 22px;
  font-weight: 700;
  color: #444;
}
.italic {
  font-style: italic;
}
.underline {
  text-decoration: underline;
  text-decoration-thickness: 2px;
  text-underline-offset: 3px;
}
.number {
  font-size: 18px;
}
.omega {
  font-size: 26px;
}

.combo {
  display: flex;
  height: 30px;
  border: 1px solid #bdbdbd;
  border-radius: 4px;
  background: #fff;
  overflow: hidden;
}
.combo input {
  flex: 1;
  min-width: 0;
  border: 0;
  padding: 0 6px 0 7px;
  background: none;
}
.combo button {
  width: 27px;
  display: grid;
  place-items: center;
  border-left: 1px solid #bdbdbd;
}
.format-bar .grip {
  margin-right: 6px;
}
.font-name {
  width: 144px;
}
.font-size {
  width: 73px;
  margin: 0 1px 0 8px;
}

/* formula bar */
.workspace {
  flex: 1;
  min-height: 0;
  display: flex;
}
.editor {
  flex: 1;
  min-width: 0;
  display: flex;
  flex-direction: column;
}
.formula-bar {
  flex: none;
  height: 30px;
  display: flex;
  align-items: center;
}
.name-box {
  width: 157px;
}
.formula-bar .sep {
  height: 25px;
  margin-left: 1px;
}
.tool.small {
  width: 26px;
  height: 28px;
}
.tool.small > svg {
  width: 12px;
  height: 10px;
}
.tool.small.dd {
  width: 34px;
}
.tool.small.dd::after {
  top: 14px;
}
.fx,
.sigma {
  font-size: 18px;
}
.fx sub {
  font-size: 14px;
}
.formula-input {
  flex: 1;
  min-width: 0;
  height: 25px;
  border: 1px solid #b4b4b4;
  padding: 0 5px;
  background: #fff;
}
.expand {
  width: 27px;
  display: grid;
  padding-left: 4px;
}

/* sheet */
.sheet-area {
  flex: 1;
  min-height: 0;
  display: flex;
}
.sheet-view {
  flex: 1;
  min-width: 0;
  overflow: hidden;
  background: #fff;
}
.sheet {
  width: max-content;
  table-layout: fixed;
  border-collapse: separate;
  border-spacing: 0;
}
.sheet th,
.sheet td {
  width: 82px;
  height: 17px;
  padding: 2px 0 0;
  line-height: 14px;
  border-right: 1px solid #c0c0c0;
  border-bottom: 1px solid #c0c0c0;
}
.sheet th {
  font-weight: 400;
  background: #f6f6f6;
  border-color: #999;
}
.sheet thead th {
  height: 21px;
  padding: 0 0 0 1px;
  line-height: 19px;
  border-top: 1px solid #999;
}
.sheet th:first-child {
  width: 41px;
}
.sheet th.current {
  background: #e95420;
  border-color: #e95420;
  color: #fff;
  font-weight: 700;
}
.sheet td {
  padding-right: 1px;
  font-family: "Liberation Sans", Arial, sans-serif;
  font-size: 13px;
  text-align: right;
  color: #222;
}
.sheet .selected {
  position: relative;
  background: #fad3c6;
  border-color: #cfa89c;
}
.sheet .edge-right {
  border-right-color: #e95420;
}
.sheet .edge-bottom {
  border-bottom-color: #e95420;
}
.sheet .cursor {
  z-index: 1;
  outline: 2px solid #33150c;
  outline-offset: -2px;
}
.sheet .cursor::after {
  content: "";
  position: absolute;
  right: -3px;
  bottom: -3px;
  width: 5px;
  height: 5px;
  background: #33150c;
}

.scroll-v {
  width: 12px;
  background: #d2d2d2;
}
.scroll-v .split {
  display: block;
  height: 8px;
  background: linear-gradient(#222, #222) center / 6px 1px no-repeat #b4b4b4;
}
.scroll-v .thumb {
  display: block;
  width: 6px;
  height: 46%;
  margin: 3px 3px 0;
  border-radius: 3px;
  background: #888;
}
.scroll-h {
  flex: none;
  height: 12px;
  margin-right: 12px;
  display: flex;
  background: #d2d2d2;
}
.scroll-h .track {
  flex: 1;
  padding: 3px 0 3px 4px;
}
.scroll-h .thumb {
  display: block;
  width: 46%;
  height: 6px;
  border-radius: 3px;
  background: #888;
}
.scroll-h .split {
  width: 5px;
  background: linear-gradient(#222, #222) center / 1px 6px no-repeat #b4b4b4;
}

.tabs {
  flex: none;
  height: 25px;
  display: flex;
  align-items: center;
  padding-left: 5px;
}
.tabs button {
  width: 25px;
  display: grid;
  place-items: center;
}
.tabs .add {
  width: 38px;
}
.tabs .tab {
  width: 74px;
  height: 25px;
  border-bottom: 3px solid #999;
  background: #fff;
  font-size: 12px;
}

/* sidebar */
.splitter {
  width: 7px;
  margin-bottom: 1px;
  display: flex;
  align-items: center;
  border: 1px solid #b4b4b4;
  border-right-color: #aaa;
}
.splitter button {
  width: 5px;
  height: 73px;
  display: grid;
  place-items: center start;
  background: #999;
}
.splitter button::before {
  content: "";
  border: 4px solid transparent;
  border-left: 5px solid #fff;
  border-right: 0;
}
.sidebar {
  width: 40px;
  margin-bottom: 1px;
  padding-top: 3px;
  display: flex;
  flex-direction: column;
  align-items: center;
  gap: 3px;
  border-top: 1px solid #b4b4b4;
  border-bottom: 1px solid #b4b4b4;
}
.sidebar button {
  width: 32px;
  height: 32px;
  display: grid;
  place-items: center;
  border-radius: 4px;
}
.sidebar svg {
  width: 24px;
  height: 24px;
}
.sidebar hr {
  width: 22px;
  height: 1px;
  margin: 0;
  border: 0;
  background: #ddd;
}
.sidebar .active {
  border: 1px solid #bdbdbd;
}
.sidebar .func {
  display: flex;
  align-items: center;
  justify-content: center;
  font-size: 20px;
  font-weight: 500;
  line-height: 24px;
}
.func sub {
  font-size: 12px;
  align-self: end;
  line-height: 20px;
}

/* find bar */
.findbar {
  flex: none;
  height: 39px;
  padding-bottom: 2px;
  display: flex;
  align-items: center;
}
.find-close {
  margin: 0 5px 0 8px;
}
.find-text {
  width: 250px;
  margin-right: 8px;
}
.find-text input::placeholder {
  color: #8a8a8a;
  opacity: 1;
}
.find-step {
  margin-right: 15px;
}
.find-all {
  margin: 0 10px 0 -5px;
  font-size: 12px;
  color: #8a8a8a;
}
.findbar label {
  display: flex;
  align-items: center;
  gap: 7px;
  margin-right: 11px;
  white-space: nowrap;
}
.findbar input[type="checkbox"] {
  appearance: none;
  width: 16px;
  height: 16px;
  margin: 0;
  border: 1px solid #b0b0b0;
  border-radius: 3px;
  background: #fff;
}

/* status bar */
.statusbar {
  flex: none;
  height: 21px;
  display: flex;
  border-top: 1px solid #b4b4b4;
  font-size: 12px;
  white-space: nowrap;
}
.cell {
  display: flex;
  align-items: center;
  justify-content: center;
  background: linear-gradient(#d8d8d8, #d8d8d8) right center / 1px 14px no-repeat;
}
.cell.grow {
  flex: 1;
}
.cell.count {
  width: 148px;
}
.cell.style {
  width: 139px;
  justify-content: start;
  padding-left: 8px;
}
.cell.language {
  width: 216px;
}
.cell.mode {
  width: 68px;
}
.cell.icon {
  width: 29px;
}
.cell.position {
  width: 293px;
  justify-content: start;
  padding-left: 10px;
}
.position span {
  display: flex;
  align-items: center;
  gap: 7px;
  width: 143px;
}
.cell.zoom {
  width: 143px;
  gap: 5px;
}
.zoom input {
  appearance: none;
  width: 98px;
  height: 10px;
  margin: 0;
  background: linear-gradient(#999, #999) center / 100% 1px no-repeat;
}
.zoom input::-webkit-slider-thumb {
  appearance: none;
  width: 10px;
  height: 10px;
  border: 1px solid #888;
  border-radius: 50%;
  background: #f7f7f7;
}
.cell.percent {
  width: 49px;
  background: none;
}
```

FILE: sheet.js
```js
const COL_WIDTH = 82;
const ROW_HEIGHT = 17;
const values = [[3, 8], [4, 9], [1, 2]];

const table = document.getElementById('sheet');
const view = table.parentElement;
const cols = Math.min(26, Math.ceil((view.clientWidth - 41) / COL_WIDTH));
const rows = Math.ceil((view.clientHeight - 21) / ROW_HEIGHT);

function th(text, scope, current) {
  const cell = document.createElement('th');
  cell.textContent = text;
  cell.scope = scope;
  if (current) cell.className = 'current';
  return cell;
}

const head = table.createTHead().insertRow();
head.append(th('', 'col'));
for (let c = 0; c < cols; c++) {
  head.append(th(String.fromCharCode(65 + c), 'col', c === 0));
}

const body = table.createTBody();
for (let r = 0; r < rows; r++) {
  const row = body.insertRow();
  row.append(th(r + 1, 'row', r === 0));
  for (let c = 0; c < cols; c++) {
    const cell = row.insertCell();
    if (r < 3 && c < 2) {
      cell.textContent = values[r][c];
      cell.classList.add('selected');
      if (c === 1) cell.classList.add('edge-right');
      if (r === 2) cell.classList.add('edge-bottom');
      if (r === 0 && c === 0) cell.classList.add('cursor');
    }
  }
}
```
